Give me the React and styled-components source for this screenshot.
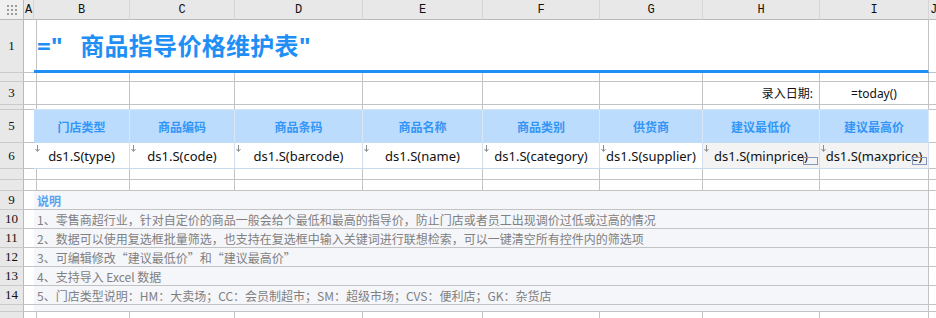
import React from 'react';
import styled, { createGlobalStyle } from 'styled-components';

const GlobalStyle = createGlobalStyle`
  html, body { margin: 0; padding: 0; background: #fff; }
  body { overflow: hidden; font-family: "Noto Sans", "Noto Sans CJK SC", sans-serif; }
  * { box-sizing: border-box; }
`;

const COLS = [24, 10, 96, 105, 128, 120, 117, 103, 117, 109, 10];
const ROWS = [20, 53, 9, 23, 5, 33, 26, 11, 11, 19, 19, 19, 19, 19, 19, 7, 20];
const LETTERS = ['A', 'B', 'C', 'D', 'E', 'F', 'G', 'H', 'I', 'J'];
const GRID = '#c3c3c3';
const BLUE = '#1f8ff5';

const Sheet = styled.div`
  display: grid;
  grid-template-columns: ${COLS.map((c) => `${c}px`).join(' ')};
  grid-template-rows: ${ROWS.map((r) => `${r}px`).join(' ')};
  width: 936px;
  height: 318px;
  overflow: hidden;
  background: #fff;
`;

const Corner = styled.div`
  background: #f0f0f0;
  border-right: 1px solid #b9b9b9;
  border-bottom: 1px solid #b9b9b9;
  display: flex;
  align-items: center;
  justify-content: center;
`;

const ColHeader = styled.div`
  background: #e8e8e8;
  border-right: 1px solid #d6d6d6;
  border-bottom: 1px solid #b9b9b9;
  display: flex;
  align-items: center;
  justify-content: center;
  font-family: "Liberation Mono", monospace;
  font-size: 12px;
  color: #111;
  overflow: hidden;
`;

const RowHeader = styled.div`
  background: #e8e8e8;
  border-right: 1px solid #b9b9b9;
  border-bottom: 1px solid #cacaca;
  display: flex;
  align-items: center;
  justify-content: center;
  font-family: "Liberation Serif", serif;
  font-size: 13px;
  color: #111;
  overflow: hidden;
`;

const Cell = styled.div`
  border-right: 1px solid ${GRID};
  border-bottom: 1px solid ${(p) => p.$bottom || GRID};
  display: flex;
  align-items: center;
  justify-content: ${(p) => p.$align || 'center'};
  padding: 0 6px;
  font-size: 12px;
  color: #111;
  white-space: nowrap;
  overflow: hidden;
`;

const TitleCell = styled.div`
  grid-column: span 8;
  border-right: 1px solid ${GRID};
  border-bottom: 3px solid ${BLUE};
  display: flex;
  align-items: center;
  padding: 0 0 2px 3px;
  font-family: "Noto Sans", "Noto Sans CJK SC", sans-serif;
  font-weight: 700;
  font-size: 24px;
  letter-spacing: 0.3px;
  color: ${BLUE};
  white-space: pre;
`;

const HeadCell = styled.div`
  background: #bcdcfd;
  border-right: 1px solid #d9e8f7;
  border-bottom: 1px solid #c3dcf6;
  display: flex;
  align-items: center;
  justify-content: center;
  font-family: "Noto Sans CJK SC", sans-serif;
  font-weight: 700;
  font-size: 12px;
  color: #3396f7;
`;

const DataCell = styled.div`
  position: relative;
  background: ${(p) => (p.$shaded ? '#f3f3f3' : '#fff')};
  border-right: 1px solid #d3dfec;
  border-bottom: 1px solid #c9dbef;
  display: flex;
  align-items: center;
  justify-content: center;
  font-family: "Noto Sans", "Noto Sans CJK SC", sans-serif;
  font-size: 13px;
  color: #111;
  white-space: nowrap;
`;

const Marker = styled.svg`
  position: absolute;
  left: 1px;
  top: 2px;
`;

const EditBox = styled.span`
  position: absolute;
  right: 1px;
  bottom: 3px;
  width: 15px;
  height: 8px;
  border: 1px solid #8596b6;
`;

const NoteCell = styled.div`
  grid-column: span 8;
  background: #f5f6fa;
  border-right: 1px solid ${GRID};
  border-bottom: 1px solid ${GRID};
  display: flex;
  align-items: center;
  padding-left: 3px;
  font-family: "Noto Sans CJK SC", sans-serif;
  font-size: 12px;
  color: ${(p) => (p.$title ? '#5aa3f2' : '#808080')};
  font-weight: ${(p) => (p.$title ? 700 : 400)};
  white-space: nowrap;
  overflow: hidden;
`;

const DotsIcon = () => (
  <svg width="10" height="10" viewBox="0 0 10 10" style={{ marginTop: 1 }}>
    {[0, 4, 8].map((y) =>
      [0, 4, 8].map((x) => <rect key={`${x}-${y}`} x={x} y={y} width="2" height="2" fill="#9c9c9c" />)
    )}
  </svg>
);

const ArrowMark = () => (
  <Marker width="5" height="7" viewBox="0 0 5 7">
    <path d="M2.5 0 V6" stroke="#8c8c8c" strokeWidth="1" />
    <path d="M0.5 4 L2.5 6.5 L4.5 4" stroke="#8c8c8c" strokeWidth="1" fill="none" />
  </Marker>
);

const blanks = (n, props = {}) => Array.from({ length: n }, (_, i) => <Cell key={`b${i}`} {...props} />);

const HEADS = ['门店类型', '商品编码', '商品条码', '商品名称', '商品类别', '供货商', '建议最低价', '建议最高价'];
const FIELDS = ['type', 'code', 'barcode', 'name', 'category', 'supplier', 'minprice', 'maxprice'];
const NOTES = [
  '1、零售商超行业，针对自定价的商品一般会给个最低和最高的指导价，防止门店或者员工出现调价过低或过高的情况',
  '2、数据可以使用复选框批量筛选，也支持在复选框中输入关键词进行联想检索，可以一键清空所有控件内的筛选项',
  '3、可编辑修改“建议最低价”和“建议最高价”',
  '4、支持导入 Excel 数据',
  '5、门店类型说明：HM：大卖场；CC：会员制超市；SM：超级市场；CVS：便利店；GK：杂货店',
];

const PlainRow = ({ label = '' }) => (
  <>
    <RowHeader>{label}</RowHeader>
    {blanks(10)}
  </>
);

export default function App() {
  return (
    <>
      <GlobalStyle />
      <Sheet>
        <Corner>
          <DotsIcon />
        </Corner>
        {LETTERS.map((l) => (
          <ColHeader key={l}>{l}</ColHeader>
        ))}

        <RowHeader>1</RowHeader>
        <Cell />
        <TitleCell>{'="  \u2009商品指导价格维护表"'}</TitleCell>
        <Cell />

        <PlainRow />

        <RowHeader>3</RowHeader>
        {blanks(7)}
        <Cell $align="flex-end">录入日期:</Cell>
        <Cell>=today()</Cell>
        <Cell />

        <RowHeader />
        <Cell />
        {blanks(8, { $bottom: '#d6e3f1' })}
        <Cell />

        <RowHeader>5</RowHeader>
        <Cell />
        {HEADS.map((h) => (
          <HeadCell key={h}>{h}</HeadCell>
        ))}
        <Cell />

        <RowHeader>6</RowHeader>
        <Cell />
        {FIELDS.map((f, i) => (
          <DataCell key={f} $shaded={i >= 6}>
            <ArrowMark />
            ds1.S({f})
            {i >= 6 && <EditBox />}
          </DataCell>
        ))}
        <Cell />

        <PlainRow />
        <PlainRow />

        <RowHeader>9</RowHeader>
        <Cell />
        <NoteCell $title>说明</NoteCell>
        <Cell />

        {NOTES.map((n, i) => (
          <React.Fragment key={i}>
            <RowHeader>{10 + i}</RowHeader>
            <Cell />
            <NoteCell>{n}</NoteCell>
            <Cell />
          </React.Fragment>
        ))}

        <RowHeader />
        <Cell />
        <NoteCell />
        <Cell />

        <PlainRow />
      </Sheet>
    </>
  );
}
